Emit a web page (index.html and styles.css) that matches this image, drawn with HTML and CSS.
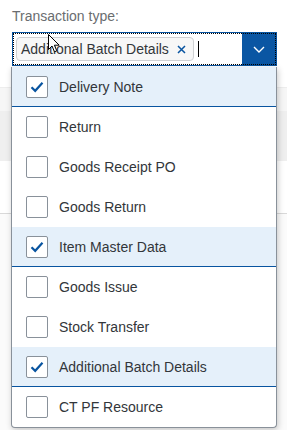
FILE: index.html
```html
<!DOCTYPE html>
<html>
<head>
<meta charset="utf-8">
<link rel="stylesheet" href="styles.css">
</head>
<body>
<div class="page">
  <div class="label">Transaction type:</div>
  <div class="field">
    <div class="input">
      <div class="token"><span class="token-text">Additional Batch Details</span><svg class="token-x" width="9" height="9" viewBox="0 0 9 9"><path d="M1 1 L8 8 M8 1 L1 8" stroke="#0854a0" stroke-width="1.5"/></svg></div>
      <span class="caret"></span>
    </div>
    <div class="btn">
      <svg width="12" height="7" viewBox="0 0 12 7"><path d="M1 1 L6 6 L11 1" fill="none" stroke="#fff" stroke-width="1.4"/></svg>
    </div>
  </div>
  <div class="bg">
    <div class="bg-band1"></div>
    <div class="bg-band2"></div>
    <div class="bg-white"></div>
    <div class="bg-rest"></div>
  </div>

  <div class="popup">
    <div class="item sel"><span class="cb on"><svg width="14" height="12" viewBox="0 0 14 12"><path d="M1.5 6.2 L5.2 9.8 L12.5 1.8" fill="none" stroke="#0854a0" stroke-width="2.2"/></svg></span><span class="txt">Delivery Note</span></div>
    <div class="item"><span class="cb"></span><span class="txt">Return</span></div>
    <div class="item"><span class="cb"></span><span class="txt">Goods Receipt PO</span></div>
    <div class="item"><span class="cb"></span><span class="txt">Goods Return</span></div>
    <div class="item sel"><span class="cb on"><svg width="14" height="12" viewBox="0 0 14 12"><path d="M1.5 6.2 L5.2 9.8 L12.5 1.8" fill="none" stroke="#0854a0" stroke-width="2.2"/></svg></span><span class="txt">Item Master Data</span></div>
    <div class="item"><span class="cb"></span><span class="txt">Goods Issue</span></div>
    <div class="item"><span class="cb"></span><span class="txt">Stock Transfer</span></div>
    <div class="item sel"><span class="cb on"><svg width="14" height="12" viewBox="0 0 14 12"><path d="M1.5 6.2 L5.2 9.8 L12.5 1.8" fill="none" stroke="#0854a0" stroke-width="2.2"/></svg></span><span class="txt">Additional Batch Details</span></div>
    <div class="item"><span class="cb"></span><span class="txt">CT PF Resource</span></div>
  </div>

  <svg class="cursor" width="12" height="19" viewBox="0 0 12 19"><path d="M0.5 0.5 L0.5 15.5 L4 12 L6.5 17.8 L8.8 16.8 L6.4 11.2 L11.2 11.2 Z" fill="#fff" stroke="#000" stroke-width="1"/></svg>
</div>
</body>
</html>
```

FILE: styles.css
```css
html, body {
  margin: 0;
  padding: 0;
  background: #fff;
}
.page {
  position: relative;
  width: 287px;
  height: 430px;
  overflow: hidden;
  font-family: "Liberation Sans", Arial, sans-serif;
  color: #32363a;
}
.label {
  padding: 6px 0 0 12px;
  height: 20px;
  font-size: 14px;
  line-height: 20px;
  color: #6a6d70;
}
.field {
  margin: 6px 0 0 12px;
  width: 265px;
  height: 34px;
  box-sizing: border-box;
  border: 1px solid #0854a0;
  display: flex;
  outline: 1px dotted #000;
  outline-offset: -2px;
}
.input {
  flex: 1;
  display: flex;
  align-items: center;
  padding-left: 3px;
  background: #fff;
}
.token {
  display: flex;
  align-items: center;
  height: 24px;
  box-sizing: border-box;
  border: 1px solid #cfd1d3;
  border-radius: 4px;
  background: #f7f7f7;
  padding: 0 7px 0 4px;
  font-size: 14px;
}
.token-text {
  color: #32363a;
}
.token-x {
  margin-left: 8px;
}
.caret {
  width: 1px;
  height: 16px;
  background: #000;
  margin-left: 4px;
}
.btn {
  width: 34px;
  background: #0a56a3;
  display: flex;
  align-items: center;
  justify-content: center;
}
.bg {
  position: absolute;
  left: 0;
  top: 87px;
  width: 287px;
}
.bg-band1 { height: 23px; background: #f6f6f6; border-top: 1px solid #ededed; }
.bg-band2 { height: 50px; background: #efefef; }
.bg-white { height: 52px; background: #fff; border-bottom: 1px solid #d9d9d9; }
.bg-rest { height: 230px; background: #fbfbfb; }

.popup {
  position: absolute;
  left: 11px;
  top: 67px;
  width: 266px;
  box-sizing: border-box;
  background: #fff;
  border: 1px solid #89919a;
  border-top: none;
  border-radius: 0 0 4px 4px;
  box-shadow: 1px 2px 6px rgba(0,0,0,0.22);
}
.item {
  height: 40px;
  box-sizing: border-box;
  display: flex;
  align-items: center;
  padding-left: 14px;
  font-size: 14px;
  color: #32363a;
}
.item.sel {
  background: #e5f0fa;
  border-bottom: 1px solid #0854a0;
}
.cb {
  width: 22px;
  height: 22px;
  box-sizing: border-box;
  border: 1px solid #89919a;
  border-radius: 2px;
  background: #fff;
  display: flex;
  align-items: center;
  justify-content: center;
}
.txt {
  margin-left: 11px;
}
.cursor {
  position: absolute;
  left: 48px;
  top: 34px;
}
```
